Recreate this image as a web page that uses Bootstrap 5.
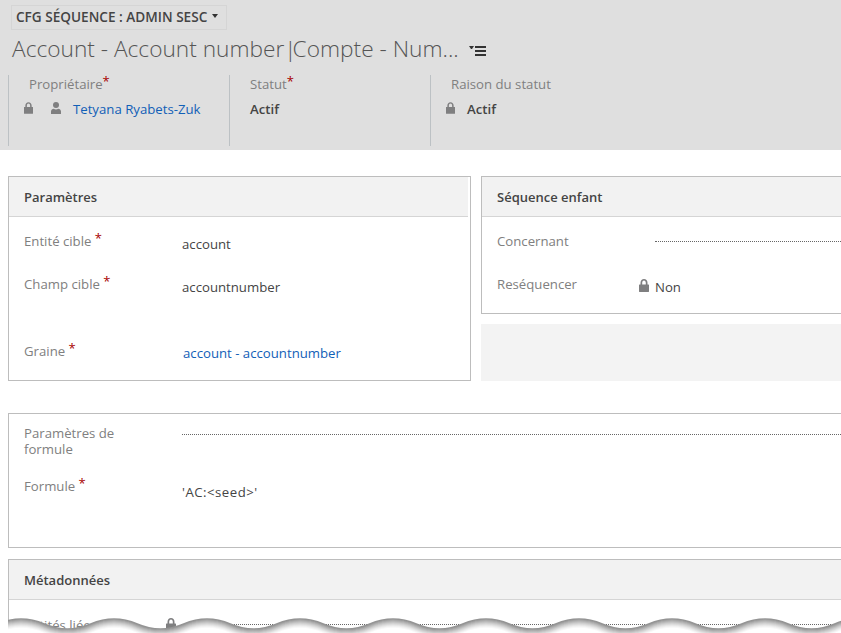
<!DOCTYPE html>
<html lang="fr">

<head>
    <meta charset="UTF-8">
    <meta name="viewport" content="width=device-width, initial-scale=1.0">
    <title>CFG Séquence</title>
    <link href="https://cdn.jsdelivr.net/npm/bootstrap@5.3.0/dist/css/bootstrap.min.css" rel="stylesheet">
    <style>
        html, body { height: 100%; overflow: hidden; }
        body {
            font-family: "Open Sans", "Liberation Sans", sans-serif;
            font-size: 13.2px;
            color: #444;
            background: #fff;
        }
        a { color: #1160b7; text-decoration: none; }
        .page-wrap { height: 633px; position: relative; overflow: hidden; }

        .rec-head { background: #dfdfdf; height: 150px; padding-top: 5px; }
        .form-pill {
            margin-left: 11px;
            height: 25px;
            width: 216px;
            border: 1px solid #d5d5d5;
            padding-left: 4px;
            font-size: 13.600px;
            font-weight: 600;
            color: #444;
            white-space: nowrap;
        }
        .pill-caret {
            width: 0;
            height: 0;
            margin-left: 5px;
            margin-top: -4px;
            border-left: 3.500px solid transparent;
            border-right: 3.500px solid transparent;
            border-top: 4px solid #333;
        }
        .rec-title {
            margin: 3px 0 0 12px;
            height: 32px;
            line-height: 32px;
            font-size: 22.700px;
            font-weight: 300;
            color: #555;
            white-space: nowrap;
        }
        .title-bar { letter-spacing: -4px; }
        .title-menu { margin-left: 10px; margin-top: 5px; }
        .head-fields { margin: 10px 0 0 8px; height: 71px; }
        .head-fld { border-left: 1px solid #bcc1c4; width: 221px; padding-left: 20px; }
        .head-fld.fld-mid { width: 201px; }
        .head-lbl { color: #808080; height: 19px; line-height: 19px; }
        .head-val { margin-top: 5px; height: 20px; line-height: 20px; font-weight: 600; color: #444; }
        .head-fld-locked { padding-left: 15px; }
        .head-fld-locked .head-lbl { padding-left: 5px; }
        .head-ico { margin-top: -3px; }
        .person-ico { margin-left: 18px; margin-right: 12px; }
        .req { color: #a80000; font-size: 13px; line-height: 1; position: relative; top: -3px; font-weight: 400; }

        .form-area { padding: 26px 0 0 8px; }
        .sect { border: 1px solid #bdbdbd; }
        .sect-head {
            height: 40px;
            line-height: 41px;
            padding-left: 15px;
            background: #f2f2f2;
            border-bottom: 1px solid #d5d5d5;
            font-size: 13px;
            font-weight: 600;
            color: #444;
        }
        .sect-left { width: 463px; height: 205px; flex: none; }
        .sect-left .sect-head { margin-right: 2px; }
        .col-right { flex: 1; margin-left: 10px; }
        .sect-open { border-right: 0; }
        .sect-child { height: 138px; }
        .blank-box { height: 57px; margin-top: 10px; background: #f3f3f3; }
        .sect-formula { height: 135px; margin-top: 32px; }
        .sect-meta { height: 100px; margin-top: 11px; }

        .fld-row { display: flex; padding: 14px 0 0 15px; height: 43px; }
        .row-tall { height: 67px; }
        .row-top { height: 48px; padding-top: 11px; }
        .row-top .fld-dots { margin-top: 9px; }
        .row-meta { padding-top: 15px; }
        .row-meta .fld-dots { margin-top: 9px; }
        .fld-lbl { width: 158px; flex: none; line-height: 20px; color: #808080; }
        .fld-val { line-height: 20px; margin-top: 3px; color: #444; }
        .val-link { margin-top: 2px; margin-left: 1px; }
        .val-low { margin-top: 6px; letter-spacing: .5px; }
        .val-flush { height: 20px; }
        .fld-dots { flex: 1; border-top: 1px dotted #666; height: 0; margin-top: 10px; }
        .lbl-two { line-height: 16px; }

        .ico { fill: #7f7f80; display: inline-block; flex: none; }
        .lock-inline { margin-left: -16px; margin-right: 6px; margin-top: -4px; }
        .row-meta .lock-inline { margin-top: 3px; }
        .torn { position: absolute; left: 0; top: 613px; }
    </style>
</head>

<body>
    <svg width="0" height="0" class="position-absolute">
        <defs>
            <symbol id="lock" viewBox="0 0 10 13">
                <path d="M1.500 5.500V3.800C1.500 1.500 3 0 5 0s3.500 1.500 3.500 3.800v1.700h1c.3 0 .5.2.5.5v6.500c0 .3-.2.5-.5.5H.5c-.3 0-.5-.2-.5-.5V6c0-.3.2-.5.500-.5zm1.700 0h3.600V3.900C6.800 2.500 6 1.600 5 1.600s-1.800.9-1.800 2.300z"/>
            </symbol>
            <symbol id="person" viewBox="0 0 10 12">
                <circle cx="5" cy="3" r="3"/>
                <path d="M0 12V9.500C0 7.800 1.300 6.700 2.800 6.700c.6.500 1.300.7 2.200.7s1.600-.2 2.200-.7C8.700 6.700 10 7.800 10 9.500V12z"/>
            </symbol>
        </defs>
    </svg>

    <div class="page-wrap">
        <div class="rec-head">
            <div class="form-pill d-flex align-items-center">CFG SÉQUENCE : ADMIN SESC<span class="pill-caret"></span></div>
            <div class="rec-title d-flex align-items-center">
                <span>Account - Account number<span class="title-bar">|</span>Compte - Num...</span>
                <svg class="title-menu" width="18" height="11" viewBox="0 0 18 11">
                    <path fill="#333" d="M0 0h5l-2 3h-1zM6 0h11v2H6zM6 4h11v2H6zM6 8h11v2H6z"/>
                </svg>
            </div>
            <div class="head-fields d-flex">
                <div class="head-fld head-fld-locked">
                    <div class="head-lbl">Propriétaire<span class="req">*</span></div>
                    <div class="head-val d-flex align-items-center">
                        <svg class="ico head-ico" width="9" height="12"><use href="#lock"/></svg>
                        <svg class="ico head-ico person-ico" width="10" height="12"><use href="#person"/></svg>
                        <a href="#" class="fw-normal text-nowrap">Tetyana Ryabets-Zuk</a>
                    </div>
                </div>
                <div class="head-fld fld-mid">
                    <div class="head-lbl">Statut<span class="req">*</span></div>
                    <div class="head-val">Actif</div>
                </div>
                <div class="head-fld head-fld-locked">
                    <div class="head-lbl">Raison du statut</div>
                    <div class="head-val d-flex align-items-center gap-2">
                        <svg class="ico head-ico" width="9" height="12"><use href="#lock"/></svg>
                        <span class="ms-1">Actif</span>
                    </div>
                </div>
            </div>
        </div>

        <div class="form-area">
            <div class="d-flex">
                <div class="sect sect-left">
                    <div class="sect-head">Paramètres</div>
                    <div class="fld-row">
                        <div class="fld-lbl">Entité cible <span class="req">*</span></div>
                        <div class="fld-val">account</div>
                    </div>
                    <div class="fld-row row-tall">
                        <div class="fld-lbl">Champ cible <span class="req">*</span></div>
                        <div class="fld-val">accountnumber</div>
                    </div>
                    <div class="fld-row">
                        <div class="fld-lbl">Graine <span class="req">*</span></div>
                        <div class="fld-val val-link"><a href="#">account - accountnumber</a></div>
                    </div>
                </div>
                <div class="col-right">
                    <div class="sect sect-open sect-child">
                        <div class="sect-head">Séquence enfant</div>
                        <div class="fld-row">
                            <div class="fld-lbl">Concernant</div>
                            <div class="fld-dots"></div>
                        </div>
                        <div class="fld-row">
                            <div class="fld-lbl">Reséquencer</div>
                            <div class="fld-val val-flush d-flex align-items-center">
                                <svg class="ico lock-inline" width="10" height="13"><use href="#lock"/></svg><span>Non</span>
                            </div>
                        </div>
                    </div>
                    <div class="blank-box"></div>
                </div>
            </div>

            <div class="sect sect-open sect-formula">
                <div class="fld-row row-top">
                    <div class="fld-lbl lbl-two">Paramètres de<br>formule</div>
                    <div class="fld-dots"></div>
                </div>
                <div class="fld-row">
                    <div class="fld-lbl">Formule <span class="req">*</span></div>
                    <div class="fld-val val-low">'AC:&lt;seed&gt;'</div>
                </div>
            </div>

            <div class="sect sect-open sect-meta">
                <div class="sect-head">Métadonnées</div>
                <div class="fld-row row-meta">
                    <div class="fld-lbl">Entités liées</div>
                    <svg class="ico lock-inline" width="10" height="13"><use href="#lock"/></svg>
                    <div class="fld-dots"></div>
                </div>
            </div>
        </div>

        <!-- torn paper edge at the bottom of the capture -->
        <svg class="torn" width="841" height="20" viewBox="0 613 841 20">
            <defs>
                <path id="wave" d="M-2.250 624q23.250 -10 46.500 0t46.500 0t46.500 0t46.500 0t46.500 0t46.500 0t46.500 0t46.500 0t46.500 0t46.500 0t46.500 0t46.500 0t46.500 0t46.500 0t46.500 0t46.500 0t46.500 0t46.500 0t46.500 0t46.500 0" fill="none" stroke-width="1.500"/>
                <filter id="soft" x="0" y="-20%" width="100%" height="140%">
                    <feGaussianBlur stdDeviation="0.6"/>
                </filter>
            </defs>
            <path fill="#fff" d="M-2.250 624q23.250 -10 46.500 0t46.500 0t46.500 0t46.500 0t46.500 0t46.500 0t46.500 0t46.500 0t46.500 0t46.500 0t46.500 0t46.500 0t46.500 0t46.500 0t46.500 0t46.500 0t46.500 0t46.500 0t46.500 0t46.500 0V640H-2.250z"/>
            <g filter="url(#soft)">
                <use href="#wave" y="8" stroke="#f8f8f8"/>
                <use href="#wave" y="7" stroke="#f0f0f0"/>
                <use href="#wave" y="6" stroke="#e6e6e6"/>
                <use href="#wave" y="5" stroke="#dadada"/>
                <use href="#wave" y="4" stroke="#cecece"/>
                <use href="#wave" y="3" stroke="#c0c0c0"/>
                <use href="#wave" y="2" stroke="#b2b2b2"/>
                <use href="#wave" y="1" stroke="#a4a4a4"/>
                <use href="#wave" y="0" stroke="#949494"/>
            </g>
            <rect x="0" y="613" width="8" height="20" fill="#fff"/>
        </svg>
    </div>

    <script src="https://cdn.jsdelivr.net/npm/bootstrap@5.3.0/dist/js/bootstrap.bundle.min.js"></script>
</body>

</html>
